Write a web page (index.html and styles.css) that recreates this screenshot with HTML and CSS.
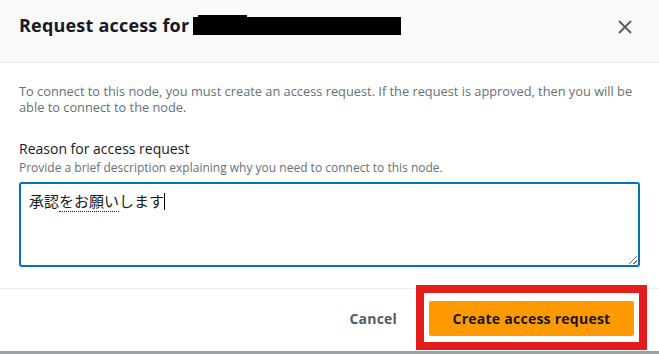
FILE: index.html
```html
<!DOCTYPE html>
<html lang="en">
<head>
    <meta charset="UTF-8">
    <meta name="viewport" content="width=device-width, initial-scale=1.0">
    <title>Request access</title>
    <link rel="stylesheet" href="styles.css">
</head>
<body>

    <!-- Modal -->
    <div class="modal">
        <div class="modal-header">
            <h2 class="title">Request access for <span class="redacted"></span></h2>
            <button class="close-btn" aria-label="Close">
                <svg width="14" height="14" viewBox="0 0 14 14">
                    <path d="M1 1 L13 13 M13 1 L1 13" stroke="#545b64" stroke-width="1.8" fill="none"/>
                </svg>
            </button>
        </div>

        <div class="modal-body">
            <p class="intro">To connect to this node, you must create an access request. If the request is approved, then you will be able to connect to the node.</p>

            <div class="field">
                <label class="field-label">Reason for access request</label>
                <div class="field-desc">Provide a brief description explaining why you need to connect to this node.</div>
                <div class="textarea">承認<span class="ime">をお願い</span>します<span class="caret"></span>
                    <span class="grip"></span>
                </div>
            </div>
        </div>

        <div class="modal-footer">
            <button class="cancel-btn">Cancel</button>
            <button class="primary-btn">Create access request</button>
        </div>

        <!-- annotation box round the primary button -->
        <div class="highlight"></div>
    </div>

    <div class="page-edge"></div>

</body>
</html>
```

FILE: styles.css
```css
body {
    margin: 0;
    padding: 0;
    font-family: "Open Sans", "Noto Sans", Arial, sans-serif;
    background-color: #ffffff;
    color: #16191f;
}

.modal {
    position: relative;
    height: 351px;
    background: #fff;
}

/* Header */
.modal-header {
    display: flex;
    align-items: center;
    justify-content: space-between;
    height: 62px;
    padding: 0 27px 0 19px;
    background-color: #fafafa;
    border-bottom: 1px solid #eaeded;
}

.title {
    margin: 0;
    font-size: 18px;
    font-weight: bold;
    letter-spacing: 0.2px;
    display: flex;
    align-items: center;
    margin-top: -13px;
}

.redacted {
    position: relative;
    display: inline-block;
    width: 208px;
    height: 18px;
    margin-left: 4px;
    margin-top: 2px;
    background: #000;
}

.redacted::before {
    content: "";
    position: absolute;
    left: 5px;
    top: -2px;
    width: 49px;
    height: 2px;
    background: #000;
}

.close-btn {
    background: none;
    border: none;
    padding: 0;
    width: 14px;
    height: 14px;
    margin-top: -8px;
    cursor: pointer;
}

.close-btn svg {
    display: block;
}

/* Body */
.modal-body {
    padding: 20px 19px 21px 19px;
}

.intro {
    margin: 0;
    font-size: 12.8px;
    line-height: 16px;
    color: #687078;
}

.field {
    margin-top: 24px;
}

.field-label {
    display: block;
    font-size: 14px;
    line-height: 20px;
    color: #16191f;
}

.field-desc {
    font-size: 12px;
    line-height: 18px;
    color: #687078;
}

.textarea {
    position: relative;
    margin-top: 5px;
    padding: 7px 8px;
    box-sizing: border-box;
    height: 85px;
    border: 2px solid #0073bb;
    border-radius: 3px;
    font-family: "Noto Sans CJK JP", sans-serif;
    font-size: 15px;
    line-height: 20px;
    color: #16191f;
}

.ime {
    border-bottom: 1px dotted #16191f;
}

.caret {
    display: inline-block;
    width: 1px;
    height: 17px;
    background: #000;
    vertical-align: -3px;
}

.grip {
    position: absolute;
    right: 1px;
    bottom: 1px;
    width: 8px;
    height: 8px;
    background: linear-gradient(135deg, transparent 45%, #777 45%, #777 55%, transparent 55%, transparent 72%, #777 72%, #777 82%, transparent 82%);
}

/* Footer */
.modal-footer {
    display: flex;
    justify-content: flex-end;
    align-items: center;
    gap: 32px;
    padding: 12px 25px 0 0;
    border-top: 1px solid #eaeded;
}

.cancel-btn {
    background: none;
    border: none;
    padding: 0;
    font-family: "Open Sans", Arial, sans-serif;
    font-size: 14px;
    font-weight: bold;
    letter-spacing: 0.2px;
    color: #545b64;
}

.primary-btn {
    width: 205px;
    height: 35px;
    background: #ff9900;
    border: none;
    border-radius: 2px;
    font-family: "Open Sans", Arial, sans-serif;
    font-size: 14px;
    font-weight: bold;
    letter-spacing: 0.25px;
    color: #16191f;
}

.highlight {
    position: absolute;
    left: 416px;
    top: 285px;
    width: 231px;
    height: 65px;
    box-sizing: border-box;
    border: 8px solid #e31c1c;
}

.page-edge {
    height: 3px;
    background: #9aa1a3;
}
```
